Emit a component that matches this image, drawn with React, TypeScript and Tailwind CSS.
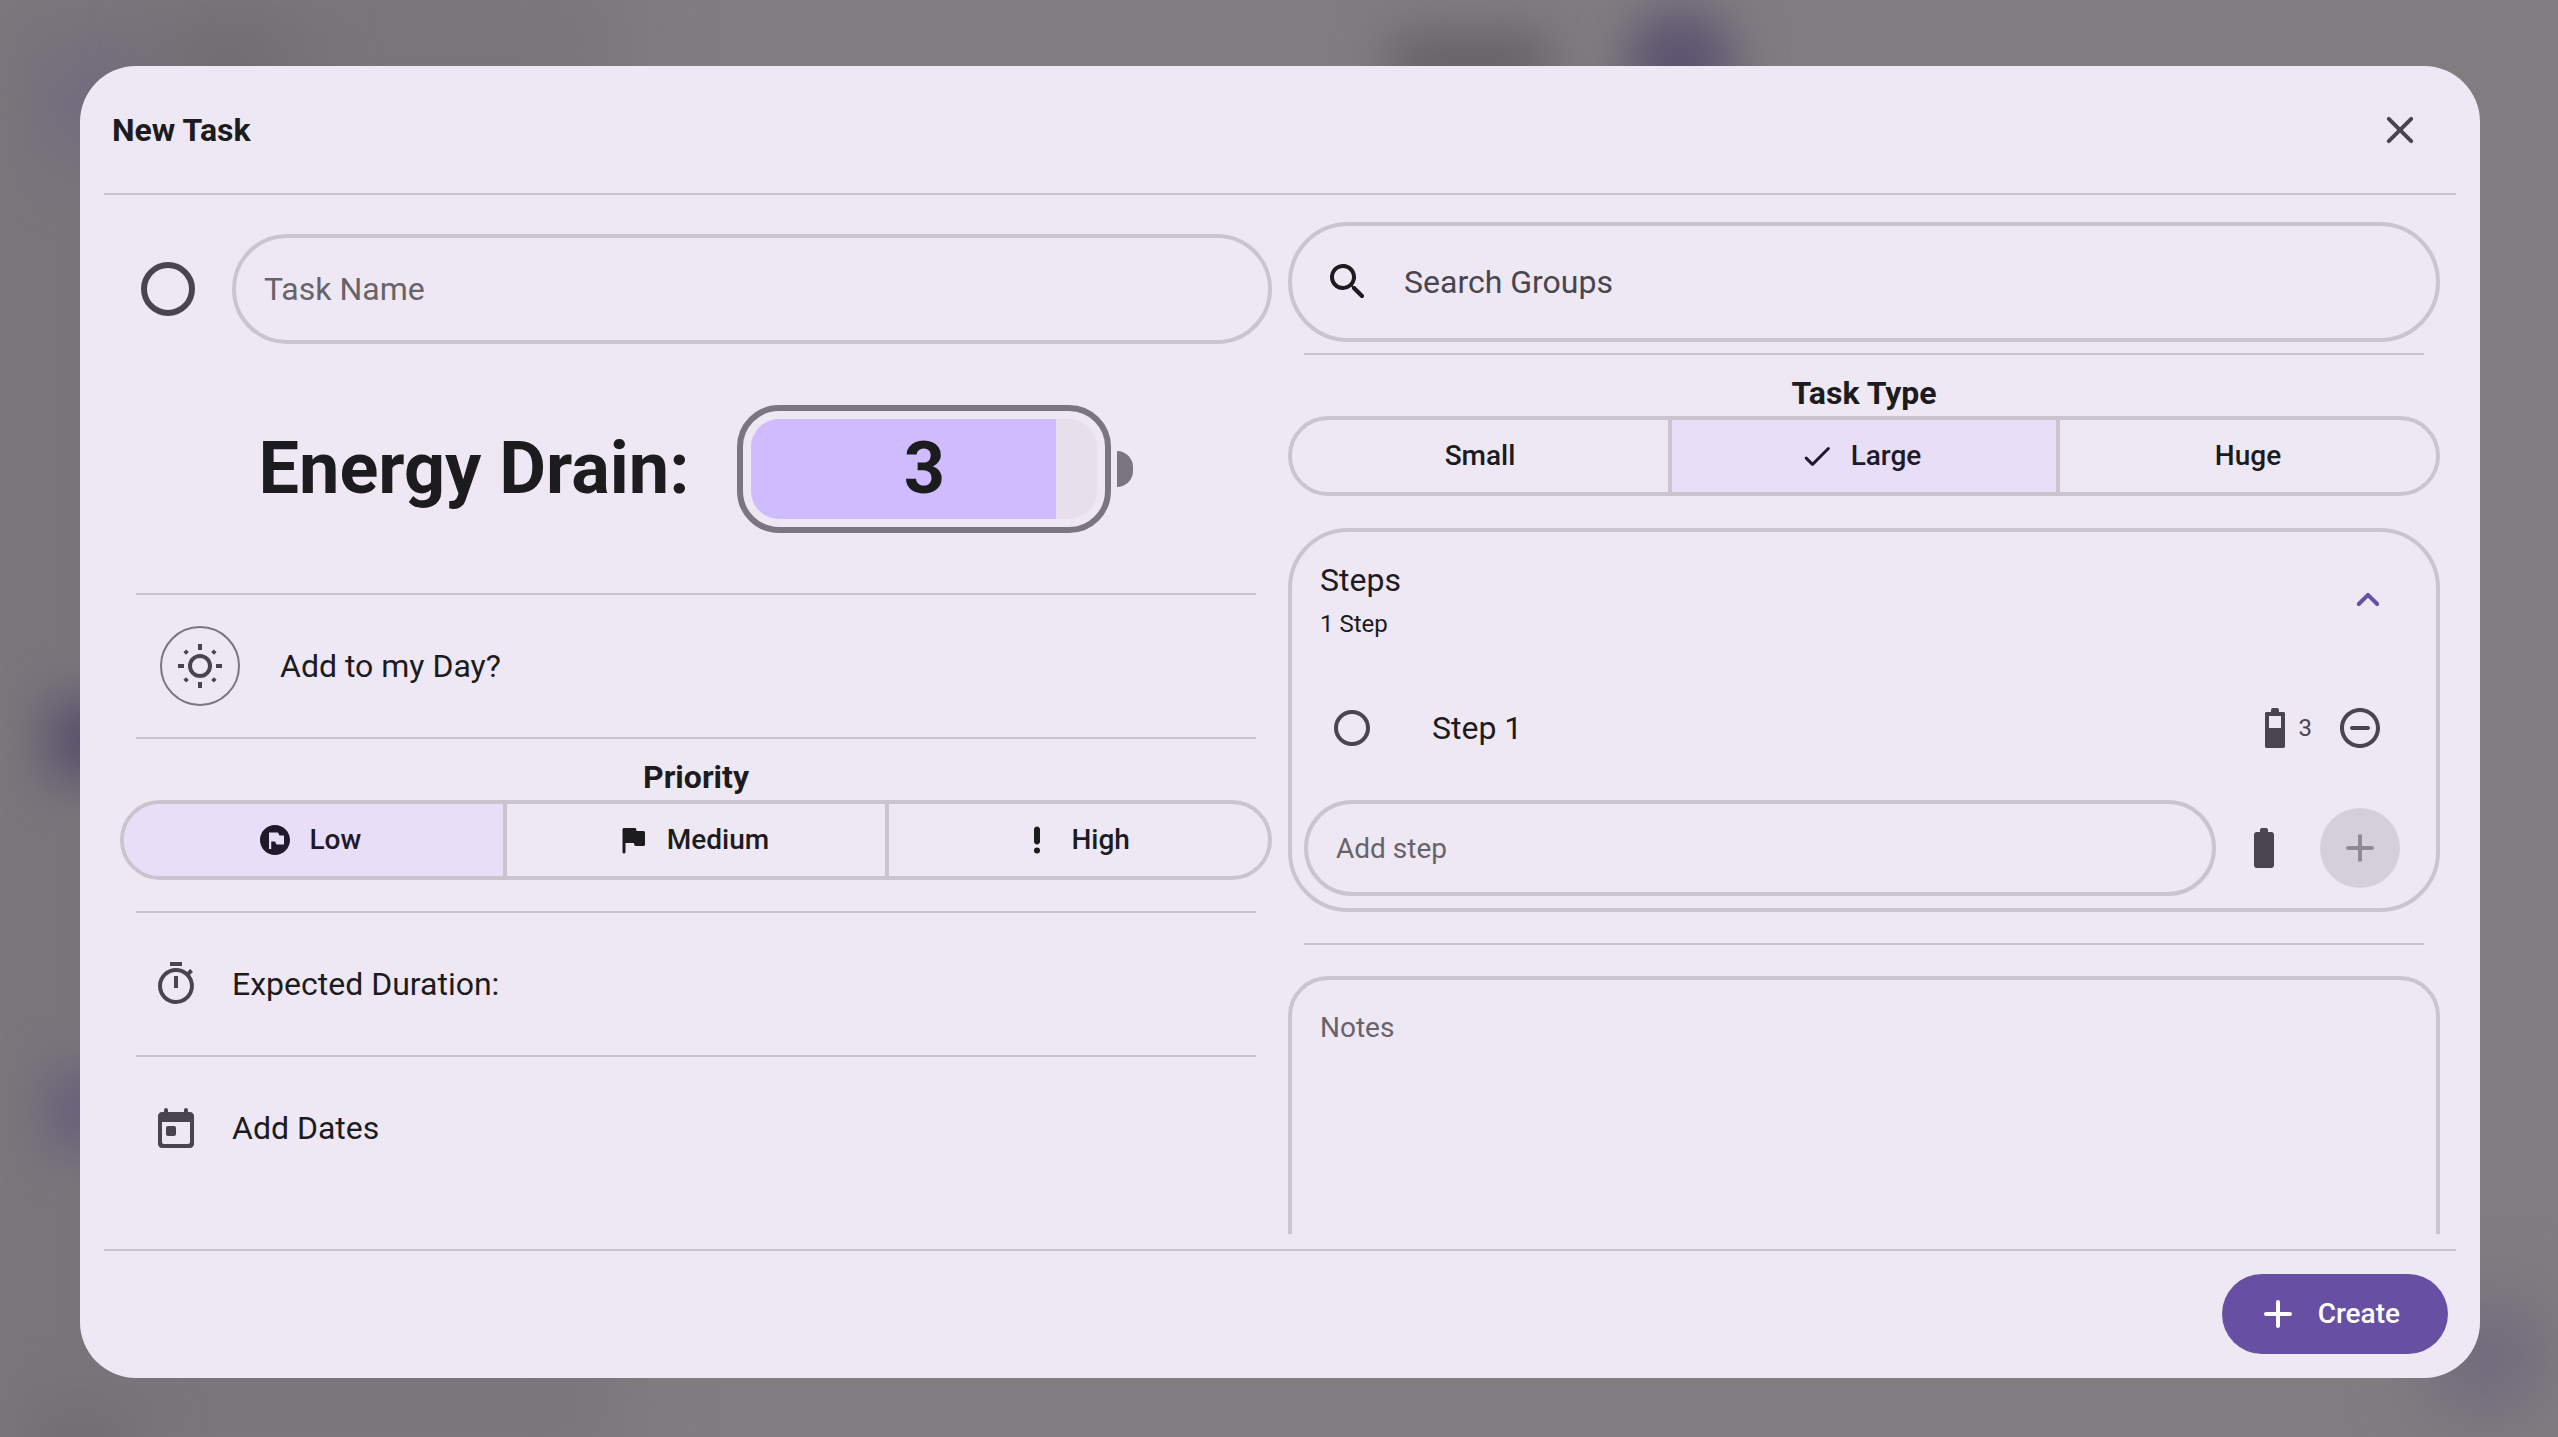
import React, { useState } from "react";
import { MdFlagCircle, MdOutlineTimer } from "react-icons/md";
import clsx from "clsx";

type IconProps = { d: string; className?: string };

function Icon({ d, className }: IconProps) {
  return (
    <svg viewBox="0 0 24 24" fill="currentColor" fillRule="evenodd" aria-hidden="true" className={clsx("shrink-0", className)}>
      <path d={d} />
    </svg>
  );
}

const CLOSE =
  "M18.3 5.71a.996.996 0 0 0-1.41 0L12 10.59 7.11 5.7A.996.996 0 1 0 5.7 7.11L10.59 12 5.7 16.89a.996.996 0 1 0 1.41 1.41L12 13.41l4.89 4.89a.996.996 0 1 0 1.41-1.41L13.41 12l4.89-4.89c.38-.38.38-1.02 0-1.4z";
const ADD =
  "M18 13h-5v5c0 .55-.45 1-1 1s-1-.45-1-1v-5H6c-.55 0-1-.45-1-1s.45-1 1-1h5V6c0-.55.45-1 1-1s1 .45 1 1v5h5c.55 0 1 .45 1 1s-.45 1-1 1z";
const BATTERY_FULL =
  "M15.67 4H14V3c0-.55-.45-1-1-1h-2c-.55 0-1 .45-1 1v1H8.33C7.6 4 7 4.6 7 5.33v15.33C7 21.4 7.6 22 8.33 22h7.33c.74 0 1.34-.6 1.34-1.33V5.33C17 4.6 16.4 4 15.67 4z";
const BATTERY_PART =
  "M16.3 4H14V3c0-.55-.45-1-1-1h-2c-.55 0-1 .45-1 1v1H7.7c-.4 0-.7.3-.7.7v16.6c0 .4.3.7.7.7h8.6c.4 0 .7-.3.7-.7V4.7c0-.4-.3-.7-.7-.7zM15 12H9V6h6z";
const REMOVE_CIRCLE =
  "M16 11H8c-.55 0-1 .45-1 1s.45 1 1 1h8c.55 0 1-.45 1-1s-.45-1-1-1zM12 2C6.48 2 2 6.48 2 12s4.48 10 10 10 10-4.48 10-10S17.52 2 12 2zm0 18c-4.41 0-8-3.59-8-8s3.59-8 8-8 8 3.59 8 8-3.59 8-8 8z";
const TODAY =
  "M19 4h-1V3c0-.55-.45-1-1-1s-1 .45-1 1v1H8V3c0-.55-.45-1-1-1s-1 .45-1 1v1H5c-1.11 0-2 .9-2 2v14c0 1.1.89 2 2 2h14c1.1 0 2-.9 2-2V6c0-1.1-.9-2-2-2zm0 15c0 .55-.45 1-1 1H6c-.55 0-1-.45-1-1V9h14v10zM8 11h3c.55 0 1 .45 1 1v3c0 .55-.45 1-1 1H8c-.55 0-1-.45-1-1v-3c0-.55.45-1 1-1z";
const SEARCH =
  "M15.5 14h-.79l-.28-.27a6.5 6.5 0 0 0 1.48-5.34c-.47-2.78-2.79-5-5.59-5.34a6.505 6.505 0 0 0-7.27 7.27c.34 2.8 2.56 5.12 5.34 5.59a6.5 6.5 0 0 0 5.34-1.48l.27.28v.79l4.25 4.25c.41.41 1.08.41 1.49 0 .41-.41.41-1.08 0-1.49L15.5 14zm-6 0C7.01 14 5 11.99 5 9.5S7.01 5 9.5 5 14 7.01 14 9.5 11.99 14 9.5 14z";
const FLAG =
  "M14.4 6l-.24-1.2c-.09-.46-.5-.8-.98-.8H6c-.55 0-1 .45-1 1v15c0 .55.45 1 1 1s1-.45 1-1v-6h5.6l.24 1.2c.09.47.5.8.98.8H19c.55 0 1-.45 1-1V7c0-.55-.45-1-1-1h-4.6z";
const PRIORITY_HIGH =
  "M12 3c1.1 0 2 .9 2 2v8c0 1.1-.9 2-2 2s-2-.9-2-2V5c0-1.1.9-2 2-2zM12 17a2 2 0 1 1 0 4 2 2 0 0 1 0-4z";
const CHECK =
  "M9 16.2l-3.5-3.5a.984.984 0 0 0-1.4 0 .984.984 0 0 0 0 1.4l4.19 4.19c.39.39 1.02.39 1.41 0L20.3 7.7a.984.984 0 0 0 0-1.4.984.984 0 0 0-1.4 0L9 16.2z";
const CHEVRON_UP =
  "M11.29 8.71L6.7 13.3a.996.996 0 1 0 1.41 1.41L12 10.83l3.88 3.88a.996.996 0 1 0 1.41-1.41L12.7 8.71a.996.996 0 0 0-1.41 0z";

function SunIcon() {
  return (
    <svg viewBox="0 0 24 24" fill="none" stroke="currentColor" strokeWidth="2" aria-hidden="true" className="size-12 shrink-0">
      <circle cx="12" cy="12" r="5" />
      <path d="M12 1v3M12 20v3M1 12h3M20 12h3" />
      <path d="M4.4 4.4l1.3 1.3M18.3 18.3l1.3 1.3M4.4 19.6l1.3-1.3M18.3 5.7l1.3-1.3" />
    </svg>
  );
}

function Divider({ className }: { className?: string }) {
  return <hr className={clsx("h-[2px] shrink-0 border-0 bg-[#cac4cf]", className)} />;
}

type Option = { label: string; icon?: React.ReactNode };

function Segmented({ title, options, initial, check }: { title: string; options: Option[]; initial: number; check?: boolean }) {
  const [selected, setSelected] = useState(initial);
  return (
    <section className="pt-4">
      <h2 className="text-center text-[32px] leading-[45px] font-bold">{title}</h2>
      <div role="group" aria-label={title} className="flex h-20 overflow-hidden rounded-full border-4 border-[#cac4cf]">
        {options.map((o, i) => {
          const icon = check && i === selected ? <Icon d={CHECK} className="size-9" /> : o.icon;
          return (
            <button
              key={o.label}
              type="button"
              aria-pressed={i === selected}
              onClick={() => setSelected(i)}
              className={clsx(
                "flex flex-1 basis-0 items-center justify-center gap-4 text-[28px] leading-10 font-medium",
                i > 0 && "border-l-4 border-[#cac4cf]",
                i === selected && "bg-[#e8def8] text-[#1e192b]",
                icon && "pr-2",
              )}
            >
              {icon}
              {o.label}
            </button>
          );
        })}
      </div>
    </section>
  );
}

function Backdrop() {
  return (
    <div aria-hidden="true" className="absolute inset-0 overflow-hidden bg-[#807d80]">
      <div className="absolute -inset-y-10 -left-10 w-[660px] bg-[#79767b] blur-2xl" />
      <div className="absolute top-14 left-12 size-24 rounded-full bg-[#6c6680] blur-2xl" />
      <div className="absolute top-8 left-44 h-16 w-28 bg-[#6b686c] blur-2xl" />
      <div className="absolute top-8 left-[1390px] h-16 w-40 bg-[#656265] blur-xl" />
      <div className="absolute top-2 left-[1624px] size-28 rounded-full bg-[#5c5570] blur-xl" />
      <div className="absolute top-[700px] left-12 h-20 w-24 bg-[#57506b] blur-xl" />
      <div className="absolute top-[1070px] left-12 h-20 w-20 bg-[#66607a] blur-xl" />
      <div className="absolute top-[1426px] left-10 h-16 w-20 bg-[#656267] blur-2xl" />
      <div className="absolute right-6 bottom-8 size-24 rounded-3xl bg-[#6a637b] blur-2xl" />
    </div>
  );
}

const field = "rounded-full border-4 border-[#cac4cf] bg-transparent outline-none placeholder:text-[#676368]";

export default function App() {
  return (
    <div className="relative h-screen overflow-hidden pt-[66px] pr-[78px] pb-[59px] pl-20 font-['Roboto',sans-serif] text-[#1c1b1e]">
      <Backdrop />
      <div role="dialog" aria-label="New Task" className="relative flex h-full flex-col overflow-hidden rounded-[56px] bg-[#eee8f4]">
        <header className="flex h-[127px] shrink-0 items-center justify-between pr-14 pl-8">
          <h1 className="text-[32px] leading-10 font-bold">New Task</h1>
          <button type="button" aria-label="Close" className="flex size-12 items-center justify-center text-[#49454e]">
            <Icon d={CLOSE} className="size-12" />
          </button>
        </header>
        <Divider className="mx-6" />

        <main className="grid min-h-0 flex-1 grid-cols-2 gap-4 overflow-hidden px-10">
          <div className="pt-[39px]">
            <div className="flex items-center gap-[37px] pl-[21px]">
              <input
                type="checkbox"
                aria-label="Task complete"
                className="size-[54px] shrink-0 appearance-none rounded-full border-6 border-[#49454e] checked:bg-[#49454e]"
              />
              <input type="text" aria-label="Task Name" placeholder="Task Name" className={clsx(field, "h-[110px] min-w-0 flex-1 px-7 text-[32px]")} />
            </div>

            <div className="flex items-center justify-center pt-[61px] pb-[60px]">
              <span className="mr-12 text-[72px] leading-[84px] font-bold">Energy Drain:</span>
              <button type="button" aria-label="Energy drain 3" className="flex items-center gap-[6px]">
                <span className="block w-[374px] rounded-[42px] border-6 border-[#7a757f] p-2">
                  <span className="relative flex h-[100px] items-center justify-center overflow-hidden rounded-[28px] bg-[#e7e0eb]">
                    <span className="absolute inset-y-0 left-0 w-[88%] bg-[#cfbcff]" />
                    <span className="relative text-[72px] leading-[84px] font-bold">3</span>
                  </span>
                </span>
                <span className="h-9 w-4 rounded-r-2xl bg-[#7a757f]" />
              </button>
            </div>

            <Divider className="mx-4" />
            <div className="flex h-[142px] items-center gap-10 pl-10">
              <button
                type="button"
                aria-label="Add to my Day"
                className="flex size-20 items-center justify-center rounded-full border-2 border-[#7a757f] text-[#49454e]"
              >
                <SunIcon />
              </button>
              <span className="text-[32px] leading-10">Add to my Day?</span>
            </div>
            <Divider className="mx-4" />

            <Segmented
              title="Priority"
              initial={0}
              options={[
                { label: "Low", icon: <MdFlagCircle className="size-9" /> },
                { label: "Medium", icon: <Icon d={FLAG} className="size-9" /> },
                { label: "High", icon: <Icon d={PRIORITY_HIGH} className="size-9" /> },
              ]}
            />

            <Divider className="mx-4 mt-[31px]" />
            <button type="button" className="flex h-[142px] w-full items-center gap-8 pl-8 text-[32px] leading-10">
              <MdOutlineTimer className="size-12 text-[#49454e]" />
              Expected Duration:
            </button>
            <Divider className="mx-4" />
            <button type="button" className="flex h-[142px] w-full items-center gap-8 pl-8 text-[32px] leading-10">
              <Icon d={TODAY} className="size-12 text-[#49454e]" />
              Add Dates
            </button>
          </div>

          <div className="pt-[27px]">
            <label className="flex h-[120px] items-center gap-8 rounded-full border-4 border-[#cac4cf] px-8">
              <Icon d={SEARCH} className="size-12" />
              <input
                type="search"
                aria-label="Search Groups"
                placeholder="Search Groups"
                className="min-w-0 flex-1 bg-transparent text-[32px] outline-none placeholder:text-[#49454e]"
              />
            </label>
            <Divider className="mx-4 mt-[11px]" />

            <Segmented title="Task Type" initial={1} check options={[{ label: "Small" }, { label: "Large" }, { label: "Huge" }]} />

            <section className="mt-8 rounded-[60px] border-4 border-[#cac4cf] px-3 pb-3">
              <div className="flex h-[136px] items-center justify-between pr-8 pl-4">
                <div>
                  <h2 className="text-[32px] leading-[48px]">Steps</h2>
                  <p className="text-2xl leading-10">1 Step</p>
                </div>
                <button type="button" aria-label="Collapse steps" className="size-12 text-[#6750a4]">
                  <Icon d={CHEVRON_UP} className="size-12" />
                </button>
              </div>

              <div className="flex h-[120px] items-center pr-10 pl-[30px]">
                <input
                  type="checkbox"
                  id="step-1"
                  className="size-9 shrink-0 appearance-none rounded-full border-4 border-[#49454e] checked:bg-[#49454e]"
                />
                <label htmlFor="step-1" className="ml-[62px] flex-1 text-[32px] leading-10">
                  Step 1
                </label>
                <span className="flex items-center text-2xl text-[#49454e]">
                  <Icon d={BATTERY_PART} className="size-12" />3
                </span>
                <button type="button" aria-label="Remove step" className="ml-6 size-12 text-[#49454e]">
                  <Icon d={REMOVE_CIRCLE} className="size-12" />
                </button>
              </div>

              <div className="mt-3 flex items-center pr-6">
                <input type="text" aria-label="Add step" placeholder="Add step" className={clsx(field, "h-24 min-w-0 flex-1 px-7 text-[28px]")} />
                <button type="button" aria-label="Step energy" className="ml-6 size-12 text-[#49454e]">
                  <Icon d={BATTERY_FULL} className="size-12" />
                </button>
                <button
                  type="button"
                  aria-label="Add"
                  disabled
                  className="ml-8 flex size-20 items-center justify-center rounded-full bg-[#d5cfda] text-[#8f8a94]"
                >
                  <Icon d={ADD} className="size-12" />
                </button>
              </div>
            </section>

            <Divider className="mx-4 mt-[31px]" />
            <textarea
              aria-label="Notes"
              placeholder="Notes"
              className="mt-[31px] block h-80 w-full resize-none rounded-[40px] border-4 border-[#cac4cf] bg-transparent px-7 py-7 text-[28px] leading-10 outline-none placeholder:text-[#676368]"
            />
          </div>
        </main>

        <Divider className="mx-6 mt-[15px]" />
        <footer className="flex shrink-0 justify-end px-8 pt-[23px] pb-6">
          <button type="button" className="flex h-20 items-center gap-4 rounded-full bg-[#6750a4] pr-12 pl-8 text-[28px] leading-10 font-medium text-white">
            <Icon d={ADD} className="size-12" />
            Create
          </button>
        </footer>
      </div>
    </div>
  );
}
